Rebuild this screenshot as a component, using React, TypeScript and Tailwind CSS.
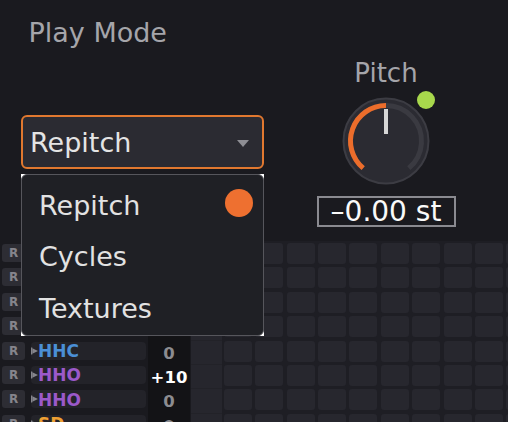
import React from "react";

type Lane = { name: string; color: string; value: string; hot?: boolean };

// the first four lanes sit under the open menu
const lanes: Lane[] = [
  { name: "", color: "#e0524f", value: "" },
  { name: "", color: "#e0524f", value: "" },
  { name: "", color: "#4fb87a", value: "" },
  { name: "", color: "#d9c34a", value: "" },
  { name: "HHC", color: "#4a8fd6", value: "0" },
  { name: "HHO", color: "#9b59c9", value: "+10", hot: true },
  { name: "HHO", color: "#9b59c9", value: "0" },
  { name: "SD", color: "#eea033", value: "0" },
];

const STEPS = 10;

function Knob() {
  // 270° pitch knob, value at centre (0 st)
  return (
    <div className="relative mt-[9px] h-[88px] w-[88px]">
      <svg width="88" height="88" viewBox="0 0 88 88">
        <circle cx="44" cy="44" r="42.5" fill="#2b2b32" stroke="#3c3c43" strokeWidth="2" />
        <path
          d="M 21.18 71.2 A 35.5 35.5 0 1 1 66.82 71.2"
          fill="none"
          stroke="#3a3a41"
          strokeWidth="5"
        />
        <path
          d="M 21.18 71.2 A 35.5 35.5 0 0 1 44 8.5"
          fill="none"
          stroke="#ec6d2b"
          strokeWidth="5"
        />
        <line x1="44" y1="12" x2="44" y2="37" stroke="#d6d6d6" strokeWidth="4" />
      </svg>
      <div className="absolute left-[75px] top-[-6px] h-[18px] w-[18px] rounded-full bg-[#a8d84c]" />
    </div>
  );
}

function TrigIcon() {
  return (
    <svg width="7" height="8" viewBox="0 0 7 8" className="shrink-0">
      <line x1="0.65" y1="0.5" x2="0.65" y2="7.5" stroke="#85858c" strokeWidth="1.3" />
      <path d="M1.3 1.3 L7 4 L1.3 6.7 Z" fill="#85858c" />
    </svg>
  );
}

export default function App() {
  return (
    <div className="relative h-[422px] w-[508px] overflow-hidden bg-[#1a1a1f] font-['DejaVu_Sans',sans-serif]">
      {/* header: play mode + pitch */}
      <div className="flex h-[241px]">
        <div className="w-[264px] shrink-0 pl-[21px] pt-[18px]">
          <div className="pl-[7.5px] text-[27px] leading-[30px] text-[#a5a5aa]">Play Mode</div>
          <div className="mt-[67px] flex h-[54px] w-[243px] items-center rounded-[6px] border-2 border-[#e1782f] bg-[#2b2b32] pl-[7px] pr-[13px]">
            <span className="pt-[2px] text-[27px] leading-[30px] text-[#e4e4e4]">Repitch</span>
            <svg width="12" height="7" viewBox="0 0 12 7" className="ml-auto mt-[3px]">
              <path d="M0 0 L12 0 L6 7 Z" fill="#8e8e94" />
            </svg>
          </div>
        </div>
        <div className="flex flex-1 flex-col items-center pt-[58px]">
          <div className="text-[26px] leading-[30px] text-[#a5a5aa]">Pitch</div>
          <Knob />
          <div className="mt-[11px] flex h-[31px] w-[139px] items-center justify-center border-2 border-[#8a8a90] text-[28px] leading-[30px] text-[#fafafa]">
            –0.00 st
          </div>
        </div>
      </div>

      {/* lanes */}
      <div className="flex h-[181px]">
        <div className="flex w-[190px] shrink-0 flex-col pt-[2px]">
          {lanes.map((l, i) => (
            <div key={i} className="flex h-[24.38px] shrink-0">
              <div className="ml-[2px] mt-[1px] flex h-[18px] w-[23px] items-center justify-center rounded-[3px] bg-[#2d2d34] text-[12px] font-bold text-[#85858c]">
                R
              </div>
              <div className="ml-[6px] mt-[1px] flex h-[18px] w-[115px] items-center rounded-[4px] bg-[#232329]">
                <TrigIcon />
                <span className="pt-[1px] text-[17px] font-bold leading-[18px]" style={{ color: l.color }}>
                  {l.name}
                </span>
              </div>
              <div
                className={
                  l.hot
                    ? "ml-[2px] flex h-full w-[42px] justify-center bg-[#131316] pt-[2px] text-[16.5px] font-bold leading-[21px] text-white"
                    : "ml-[2px] flex h-full w-[42px] justify-center bg-[#131316] pt-[2px] text-[16.5px] font-bold leading-[21px] text-[#8c8c90]"
                }
              >
                {l.value}
              </div>
            </div>
          ))}
        </div>
        <div className="ml-[1px] flex w-[31px] shrink-0 flex-col bg-[#26262d] pt-[2px]">
          {lanes.map((_, i) => (
            <div key={i} className="h-[24.38px] shrink-0 border-b border-[#222228]" />
          ))}
        </div>
        <div className="flex flex-1 flex-col overflow-hidden bg-[#1e1e24] pl-[2px] pt-[2px]">
          {lanes.map((_, i) => (
            <div key={i} className="flex h-[24.38px] shrink-0 gap-[3.37px]">
              {Array.from({ length: STEPS }).map((__, j) => (
                <div key={j} className="h-[21px] w-[28px] shrink-0 rounded-[3px] bg-[#27272e]" />
              ))}
            </div>
          ))}
        </div>
      </div>

      {/* open play-mode menu */}
      <div className="absolute left-[21px] top-[174px] h-[162px] w-[243px] bg-white">
        <div className="h-full rounded-[6px] border border-[#56565c] bg-[#1f2025] pl-[17px] pr-[10px] pt-[5px]">
          <div className="flex h-[51.5px] items-center">
            <span className="text-[27px] leading-[30px] text-[#e2e2e2]">Repitch</span>
            <div className="mb-[5px] ml-auto h-[28px] w-[28px] rounded-full bg-[#ee7030]" />
          </div>
          <div className="flex h-[51.5px] items-center">
            <span className="text-[27px] leading-[30px] text-[#e2e2e2]">Cycles</span>
          </div>
          <div className="flex h-[51.5px] items-center">
            <span className="text-[27px] leading-[30px] text-[#e2e2e2]">Textures</span>
          </div>
        </div>
      </div>
    </div>
  );
}
